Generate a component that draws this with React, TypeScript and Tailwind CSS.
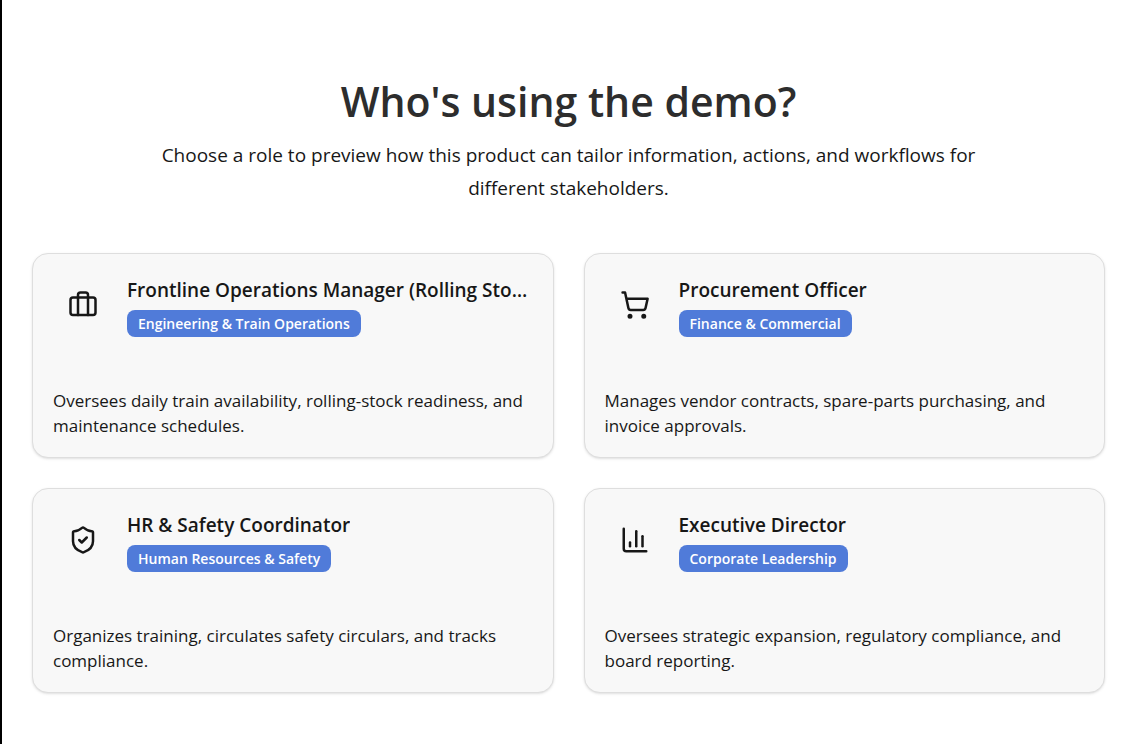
import { Briefcase, ChartColumn, ShieldCheck, ShoppingCart, type LucideIcon } from "lucide-react";

type Role = {
  title: string;
  department: string;
  description: string;
  icon: LucideIcon;
};

const roles: Role[] = [
  {
    title: "Frontline Operations Manager (Rolling Stock)",
    department: "Engineering & Train Operations",
    description:
      "Oversees daily train availability, rolling-stock readiness, and maintenance schedules.",
    icon: Briefcase,
  },
  {
    title: "Procurement Officer",
    department: "Finance & Commercial",
    description: "Manages vendor contracts, spare-parts purchasing, and invoice approvals.",
    icon: ShoppingCart,
  },
  {
    title: "HR & Safety Coordinator",
    department: "Human Resources & Safety",
    description: "Organizes training, circulates safety circulars, and tracks compliance.",
    icon: ShieldCheck,
  },
  {
    title: "Executive Director",
    department: "Corporate Leadership",
    description: "Oversees strategic expansion, regulatory compliance, and board reporting.",
    icon: ChartColumn,
  },
];

function RoleCard({ title, department, description, icon: Icon }: Role) {
  return (
    <button
      type="button"
      className="flex min-w-0 cursor-pointer flex-col rounded-2xl border border-[#dedede] bg-[#f8f8f8] px-5 pt-5 pb-[19px] text-left text-[#171717] shadow-sm"
    >
      <span className="flex w-full items-start gap-[29px] pr-[5px] pl-[15px]">
        <Icon size={30} strokeWidth={2} className="mt-4 shrink-0" aria-hidden="true" />
        <span className="flex min-w-0 flex-col items-start">
          <span className="block w-full truncate text-[19px] leading-8 font-semibold">{title}</span>
          <span className="mt-1 rounded-lg bg-[#507bd9] px-[11px] text-[14px] leading-[27px] font-semibold whitespace-nowrap text-white">
            {department}
          </span>
        </span>
      </span>
      <span className="mt-[51px] block text-[17px] leading-[25px]">{description}</span>
    </button>
  );
}

export default function App() {
  return (
    <main className="min-h-screen border-l-2 border-black bg-white pt-[74px] pr-[33px] pb-12 pl-[30px] font-['Open_Sans','Noto_Sans',sans-serif]">
      <header className="mx-auto flex max-w-[840px] flex-col items-center text-center">
        <h1 className="text-[41px] leading-[54px] font-semibold text-[#2d2d2d]">
          Who's using the demo?
        </h1>
        <p className="mt-[11px] text-[19px] leading-[33px] text-[#171717]">
          Choose a role to preview how this product can tailor information, actions, and workflows
          for different stakeholders.
        </p>
      </header>
      <section aria-label="Roles" className="mt-12 grid grid-cols-1 gap-[30px] md:grid-cols-2">
        {roles.map((role) => (
          <RoleCard key={role.title} {...role} />
        ))}
      </section>
    </main>
  );
}
